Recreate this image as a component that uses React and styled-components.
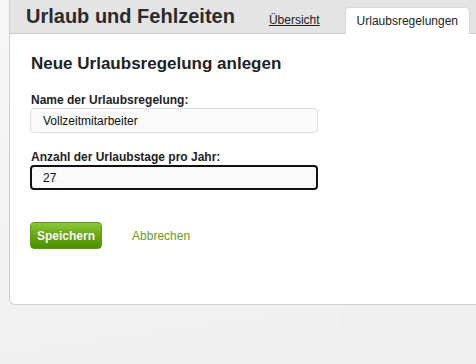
import React from "react";
import styled, { createGlobalStyle } from "styled-components";

const GlobalStyle = createGlobalStyle`
    html, body {
        margin: 0;
        padding: 0;
        height: 100%;
        overflow: hidden;
    }
    body {
        font-family: "Liberation Sans", Arial, sans-serif;
        background:
            linear-gradient(172deg, #f7f7f7 0%, #f2f2f2 60%, #f0f0f0 100%) no-repeat 0 0 / 341px 100%,
            #efefef;
    }
`;

const Page = styled.div`
    padding-left: 9px;
`;

const Panel = styled.div`
    box-sizing: border-box;
    width: 468px;
    background-color: #fff;
    border: 1px solid #cfcfcf;
    border-top: 0;
    border-bottom-left-radius: 6px;
`;

const Header = styled.div`
    display: flex;
    align-items: flex-end;
    justify-content: space-between;
    height: 33px;
    background-color: #e4e4e4;
    border-bottom: 1px solid #cdcdcd;
    padding: 0 6px 0 16px;
`;

const Title = styled.h1`
    margin: 0;
    align-self: stretch;
    font-size: 20px;
    font-weight: 700;
    line-height: 33px;
    color: #2b2b2b;
`;

const Tabs = styled.div`
    display: flex;
    align-items: flex-end;
    gap: 25px;
    margin-bottom: -1px;
`;

const TabLink = styled.a`
    font-size: 12px;
    line-height: 27px;
    color: #222;
    text-decoration: underline;
    cursor: pointer;
`;

const ActiveTab = styled.span`
    display: block;
    height: 27px;
    box-sizing: border-box;
    padding: 0 11px;
    font-size: 12px;
    line-height: 26px;
    color: #222;
    background-color: #fff;
    border: 1px solid #d9d9d9;
    border-bottom: 0;
    border-radius: 5px 5px 0 0;
`;

const Body = styled.div`
    padding: 20px 20px 55px 20px;
`;

const Heading = styled.h2`
    margin: 0 0 19px 1px;
    font-size: 17px;
    font-weight: 700;
    line-height: 20px;
    color: #222;
`;

const Field = styled.div`
    display: flex;
    flex-direction: column;
    margin-bottom: ${({ $gap }) => $gap}px;
`;

const Label = styled.label`
    margin: 0 0 1px 1px;
    font-size: 12px;
    font-weight: 700;
    line-height: 14px;
    color: #222;
`;

const Input = styled.input`
    box-sizing: border-box;
    width: 288px;
    height: 25px;
    margin: 0;
    padding: 0 0 0 ${({ $focused }) => ($focused ? 11 : 12)}px;
    font-family: "Liberation Sans", Arial, sans-serif;
    font-size: 12px;
    color: #111;
    background-color: #fafafa;
    border: ${({ $focused }) => ($focused ? "2px solid #111" : "1px solid #dedede")};
    border-radius: 4px;
    outline: none;
`;

const Actions = styled.div`
    display: flex;
    align-items: center;
    gap: 30px;
`;

const SaveButton = styled.button`
    box-sizing: border-box;
    height: 27px;
    padding: 0 6px;
    font-family: "Liberation Sans", Arial, sans-serif;
    font-size: 12px;
    font-weight: 700;
    color: #fff;
    text-shadow: 0 0 1px rgba(0, 0, 0, 0.2);
    background: linear-gradient(to bottom, #8dc63c 0%, #66a80f 50%, #4a9100 100%);
    border: 1px solid #5b9a12;
    border-radius: 4px;
    cursor: pointer;
`;

const CancelLink = styled.a`
    font-size: 12px;
    color: #6b9c1c;
    text-decoration: none;
    cursor: pointer;
`;

export default function App() {
    return (
        <Page>
            <GlobalStyle />
            <Panel>
                <Header>
                    <Title>Urlaub und Fehlzeiten</Title>
                    <Tabs>
                        <TabLink>Übersicht</TabLink>
                        <ActiveTab>Urlaubsregelungen</ActiveTab>
                    </Tabs>
                </Header>
                <Body>
                    <Heading>Neue Urlaubsregelung anlegen</Heading>
                    <Field $gap={17}>
                        <Label>Name der Urlaubsregelung:</Label>
                        <Input defaultValue="Vollzeitmitarbeiter" />
                    </Field>
                    <Field $gap={32}>
                        <Label>Anzahl der Urlaubstage pro Jahr:</Label>
                        <Input $focused defaultValue="27" />
                    </Field>
                    <Actions>
                        <SaveButton>Speichern</SaveButton>
                        <CancelLink>Abbrechen</CancelLink>
                    </Actions>
                </Body>
            </Panel>
        </Page>
    );
}
